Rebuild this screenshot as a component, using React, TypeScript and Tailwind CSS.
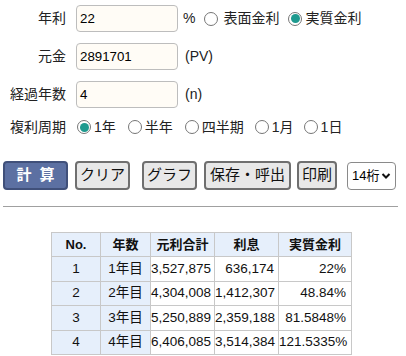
const font = "font-['Liberation_Sans','Noto_Sans_CJK_JP',sans-serif]";

const Radio = ({ checked = false }: { checked?: boolean }) => (
  <span className="inline-flex h-[14px] w-[14px] shrink-0 items-center justify-center rounded-full border border-[#767676] bg-white">
    {checked && <span className="h-[9px] w-[9px] rounded-full bg-[#1e9a8f]" />}
  </span>
);

const Field = ({ label, value, children }: { label: string; value: string; children?: React.ReactNode }) => (
  <div className="flex h-[27px] items-center">
    <span className="w-[66px] text-right">{label}</span>
    <div className="ml-[10px] flex h-[27px] w-[102px] items-center rounded-[4px] border border-[#bdbdbd] bg-[#fffcf6] pl-[3px] text-[13.3px] text-black">
      {value}
    </div>
    {children}
  </div>
);

const rows = [
  ["1", "1年目", "3,527,875", "636,174", "22%"],
  ["2", "2年目", "4,304,008", "1,412,307", "48.84%"],
  ["3", "3年目", "5,250,889", "2,359,188", "81.5848%"],
  ["4", "4年目", "6,406,085", "3,514,384", "121.5335%"],
];

const btn =
  "flex h-[29px] items-center justify-center rounded-[4px] border-2 border-[#6f6f6f] bg-[#e8e8e8] text-[15px] text-[#111]";

export default function App() {
  return (
    <div className={`h-[356px] w-[406px] overflow-hidden bg-white text-[14px] text-[#222] ${font}`}>
      <div className="flex flex-col gap-[11px] pt-[5px]">
        <Field label="年利" value="22">
          <span className="ml-[5px]">%</span>
          <span className="ml-[9px] flex items-center gap-[5px]">
            <Radio />
            <span>表面金利</span>
          </span>
          <span className="ml-[9px] flex items-center gap-[3px]">
            <Radio checked />
            <span>実質金利</span>
          </span>
        </Field>
        <Field label="元金" value="2891701">
          <span className="ml-[7px]">(PV)</span>
        </Field>
        <Field label="経過年数" value="4">
          <span className="ml-[7px]">(n)</span>
        </Field>
      </div>

      <div className="mt-[9px] flex h-[20px] items-center">
        <span className="w-[66px] text-right">複利周期</span>
        <span className="ml-[11px] flex items-center gap-[3px]">
          <Radio checked />
          <span>1年</span>
        </span>
        <span className="ml-[12px] flex items-center gap-[3px]">
          <Radio />
          <span>半年</span>
        </span>
        <span className="ml-[12px] flex items-center gap-[3px]">
          <Radio />
          <span>四半期</span>
        </span>
        <span className="ml-[11px] flex items-center gap-[3px]">
          <Radio />
          <span>1月</span>
        </span>
        <span className="ml-[10px] flex items-center gap-[3px]">
          <Radio />
          <span>1日</span>
        </span>
      </div>

      <div className="mt-[24px] flex items-center">
        <div className="ml-[3px] flex h-[29px] w-[65px] items-center justify-center rounded-[4px] border-2 border-[#40507a] bg-[#5c70a2] text-[15px] font-bold tracking-[8px] text-white">
          <span className="pl-[8px]">計算</span>
        </div>
        <div className={`${btn} ml-[7px] w-[55px]`}>クリア</div>
        <div className={`${btn} ml-[12px] w-[55px]`}>グラフ</div>
        <div className={`${btn} ml-[7px] w-[87px]`}>保存・呼出</div>
        <div className={`${btn} ml-[6px] w-[40px]`}>印刷</div>
        <div className="ml-[10px] flex h-[28px] w-[49px] items-center justify-between rounded-[4px] border border-[#8a8a8a] bg-white pl-[4px] pr-[4px] text-[13px] text-black">
          <span>14桁</span>
          <svg width="10" height="8" viewBox="0 0 10 8">
            <path d="M1.5 2 L5 5.5 L8.5 2" fill="none" stroke="#111" strokeWidth="2" />
          </svg>
        </div>
      </div>

      <div className="ml-[3px] mt-[16px] h-[2px] w-[395px] border-t border-[#a0a0a0] border-b-[#e8e8e8]" />

      <table className="ml-[51px] mt-[24px] w-[300px] table-fixed border-collapse border border-[#c4c4c4] text-[13.5px] text-[#111]">
        <colgroup>
          <col className="w-[49px]" />
          <col className="w-[50px]" />
          <col className="w-[64px]" />
          <col className="w-[64px]" />
          <col className="w-[73px]" />
        </colgroup>
        <thead>
          <tr className="h-[24px] bg-[#e6effb] text-[13px] font-bold">
            {["No.", "年数", "元利合計", "利息", "実質金利"].map((h) => (
              <th key={h} className="border border-[#c8c8c8] p-0 text-center">
                {h}
              </th>
            ))}
          </tr>
        </thead>
        <tbody>
          {rows.map((r) => (
            <tr key={r[0]} className="h-[24.5px]">
              <td className="border border-[#c8c8c8] bg-[#e6effb] p-0 text-center">{r[0]}</td>
              <td className="border border-[#c8c8c8] bg-[#e6effb] p-0 text-center">{r[1]}</td>
              <td className="whitespace-nowrap border border-[#c8c8c8] p-0 pr-[4px] text-right">{r[2]}</td>
              <td className="whitespace-nowrap border border-[#c8c8c8] p-0 pr-[4px] text-right">{r[3]}</td>
              <td className="whitespace-nowrap border border-[#c8c8c8] p-0 pr-[5px] text-right">{r[4]}</td>
            </tr>
          ))}
        </tbody>
      </table>
    </div>
  );
}
